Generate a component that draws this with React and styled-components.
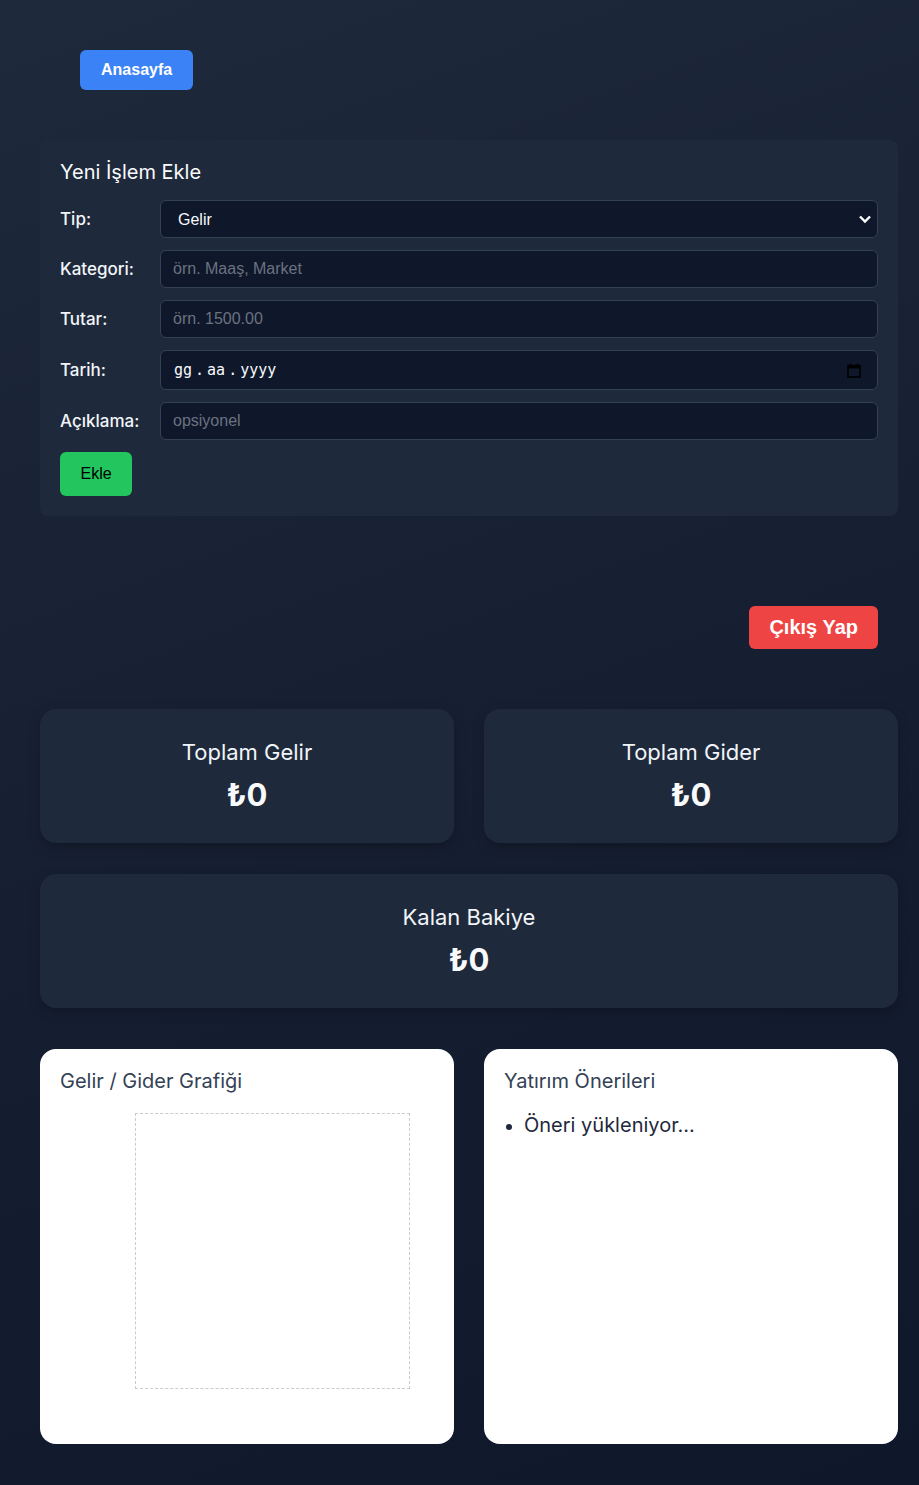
import React from 'react';
import styled, { createGlobalStyle } from 'styled-components';

// 전역 스타일
const GlobalStyle = createGlobalStyle`
  * { box-sizing: border-box; }
  html, body {
    margin: 0;
    padding: 0;
  }
  body {
    min-height: 1485px;
    background: linear-gradient(160deg, #1e293b 0%, #172033 45%, #0f172a 100%);
    font-family: Inter, "Noto Sans", sans-serif;
    color: #f1f5f9;
  }
`;

const Page = styled.div`
  padding: 40px 21px 41px 40px;
`;

const Nav = styled.nav`
  padding: 10px 40px;
  display: flex;
  align-items: center;
`;

const Button = styled.button`
  border: none;
  border-radius: 6px;
  font-family: "Liberation Sans", Arial, sans-serif;
  cursor: pointer;
  background: ${p => p.$bg};
  color: ${p => p.$color || '#fff'};
  font-size: ${p => p.$size || 16}px;
  font-weight: ${p => (p.$bold ? 700 : 400)};
  height: ${p => p.$h}px;
  padding: 0 ${p => p.$px}px;
`;

// 폼 카드
const FormCard = styled.section`
  margin-top: 40px;
  background: #1e293b;
  border-radius: 8px;
  padding: 20px 20px 20px;
  display: flex;
  flex-direction: column;
  gap: 12px;
`;

const FormTitle = styled.h3`
  margin: 0 0 4px;
  font-size: 20px;
  font-weight: 400;
  color: #f8fafc;
`;

const Row = styled.div`
  display: flex;
  align-items: center;
`;

const Label = styled.label`
  width: 100px;
  flex-shrink: 0;
  font-size: 17px;
  font-weight: 500;
  color: #f1f5f9;
`;

const fieldBase = `
  flex: 1;
  height: 38px;
  background: #0f172a;
  border: 1px solid #334155;
  border-radius: 6px;
  color: #f8fafc;
  font-family: "Liberation Sans", Arial, sans-serif;
  font-size: 16px;
  outline: none;
`;

const Input = styled.input`
  ${fieldBase}
  padding: 0 12px;
  &::placeholder { color: #6b7280; }
`;

const SelectWrap = styled.div`
  flex: 1;
  position: relative;
  display: flex;
`;

const Select = styled.select`
  ${fieldBase}
  appearance: none;
  padding: 0 17px;
`;

const Chevron = styled.svg`
  position: absolute;
  right: 6px;
  top: 13px;
  pointer-events: none;
`;

const DateField = styled.div`
  ${fieldBase}
  display: flex;
  align-items: center;
  height: 40px;
  padding: 0 16px 0 13px;
  font-family: "DejaVu Sans Mono", "Liberation Mono", monospace;
  font-size: 15px;
`;

const DateSep = styled.span`
  padding: 0 3px;
`;

const CalendarIcon = styled.svg`
  margin-left: auto;
`;

const ActionBar = styled.div`
  display: flex;
  justify-content: flex-end;
  padding: 0 20px;
  margin-top: 90px;
`;

// 요약 카드
const StatGrid = styled.div`
  margin-top: 60px;
  display: grid;
  grid-template-columns: 1fr 1fr;
  gap: 31px 30px;
`;

const StatCard = styled.div`
  grid-column: ${p => (p.$wide ? '1 / -1' : 'auto')};
  height: 134px;
  background: #1e293b;
  border-radius: 16px;
  box-shadow: 0 4px 12px rgba(0, 0, 0, 0.25);
  display: flex;
  flex-direction: column;
  align-items: center;
  justify-content: center;
  gap: 11px;
`;

const StatTitle = styled.div`
  font-size: 22px;
  color: #f1f5f9;
`;

const StatValue = styled.div`
  font-size: 31px;
  font-weight: 700;
  color: #f8fafc;
`;

const PanelGrid = styled.div`
  margin-top: 41px;
  display: grid;
  grid-template-columns: 1fr 1fr;
  gap: 30px;
`;

const Panel = styled.div`
  height: 395px;
  background: #ffffff;
  border-radius: 16px;
  padding: 20px;
  color: #334155;
`;

const PanelTitle = styled.h3`
  margin: 0;
  font-size: 20px;
  font-weight: 400;
  line-height: 24px;
  color: #334155;
`;

const ChartBox = styled.div`
  width: 275px;
  height: 276px;
  margin: 20px 0 0 75px;
  border: 1px dashed #cbcbcb;
`;

const List = styled.ul`
  margin: 20px 0 0;
  padding-left: 20px;
  font-size: 20px;
  color: #1e293b;
  li::marker { font-size: 18px; }
`;

export default function App() {
  return (
    <>
      <GlobalStyle />
      <Page>
        <Nav>
          <Button $bg="#3b82f6" $bold $h={40} $px={21}>Anasayfa</Button>
        </Nav>

        <FormCard>
          <FormTitle>Yeni İşlem Ekle</FormTitle>
          <Row>
            <Label>Tip:</Label>
            <SelectWrap>
              <Select defaultValue="Gelir">
                <option>Gelir</option>
                <option>Gider</option>
              </Select>
              <Chevron width="14" height="12" viewBox="0 0 14 12">
                <path d="M2 3.5l5 5 5-5" fill="none" stroke="#fff" strokeWidth="2.4" />
              </Chevron>
            </SelectWrap>
          </Row>
          <Row>
            <Label>Kategori:</Label>
            <Input placeholder="örn. Maaş, Market" />
          </Row>
          <Row>
            <Label>Tutar:</Label>
            <Input placeholder="örn. 1500.00" />
          </Row>
          <Row>
            <Label>Tarih:</Label>
            <DateField>
              <span>gg</span>
              <DateSep>.</DateSep>
              <span>aa</span>
              <DateSep>.</DateSep>
              <span>yyyy</span>
              <CalendarIcon width="14" height="15" viewBox="0 0 14 15">
                <rect x="1" y="2.5" width="12" height="11.5" fill="none" stroke="#000" strokeWidth="1.6" />
                <rect x="1" y="2.5" width="12" height="3" fill="#000" />
                <path d="M3.5 0.5v2.5M10.5 0.5v2.5" stroke="#000" strokeWidth="1.2" />
              </CalendarIcon>
            </DateField>
          </Row>
          <Row>
            <Label>Açıklama:</Label>
            <Input placeholder="opsiyonel" />
          </Row>
          <div>
            <Button $bg="#22c55e" $color="#000" $h={44} $px={20.5}>Ekle</Button>
          </div>
        </FormCard>

        <ActionBar>
          <Button $bg="#ef4444" $bold $size={20} $h={43} $px={20}>Çıkış Yap</Button>
        </ActionBar>

        <StatGrid>
          <StatCard>
            <StatTitle>Toplam Gelir</StatTitle>
            <StatValue>₺0</StatValue>
          </StatCard>
          <StatCard>
            <StatTitle>Toplam Gider</StatTitle>
            <StatValue>₺0</StatValue>
          </StatCard>
          <StatCard $wide>
            <StatTitle>Kalan Bakiye</StatTitle>
            <StatValue>₺0</StatValue>
          </StatCard>
        </StatGrid>

        <PanelGrid>
          <Panel>
            <PanelTitle>Gelir / Gider Grafiği</PanelTitle>
            <ChartBox />
          </Panel>
          <Panel>
            <PanelTitle>Yatırım Önerileri</PanelTitle>
            <List>
              <li>Öneri yükleniyor...</li>
            </List>
          </Panel>
        </PanelGrid>
      </Page>
    </>
  );
}
